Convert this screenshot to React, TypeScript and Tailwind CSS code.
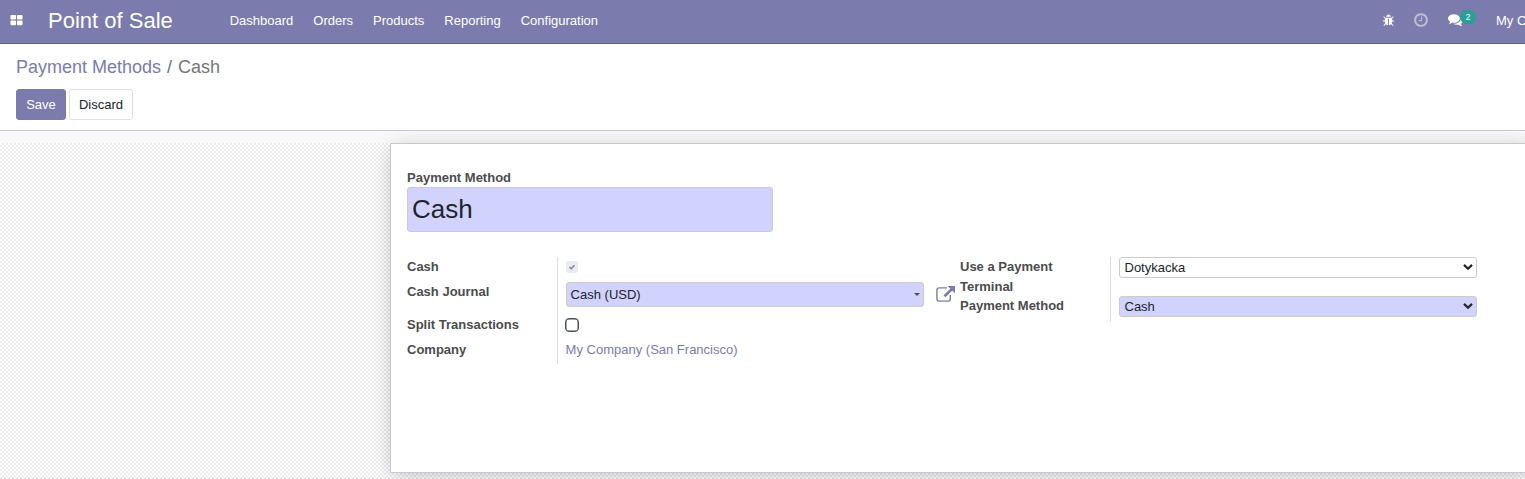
import React from "react";

const icons = {
  grid: "M832 1024v384q0 52-38 90t-90 38h-512q-52 0-90-38t-38-90v-384q0-52 38-90t90-38h512q52 0 90 38t38 90zm0-768v384q0 52-38 90t-90 38h-512q-52 0-90-38t-38-90v-384q0-52 38-90t90-38h512q52 0 90 38t38 90zm896 768v384q0 52-38 90t-90 38h-512q-52 0-90-38t-38-90v-384q0-52 38-90t90-38h512q52 0 90 38t38 90zm0-768v384q0 52-38 90t-90 38h-512q-52 0-90-38t-38-90v-384q0-52 38-90t90-38h512q52 0 90 38t38 90z",
  bug: "M1696 960q0 26-19 45t-45 19h-224q0 171-67 290l208 209q19 19 19 45t-19 45q-18 19-45 19t-45-19l-198-197q-5 5-15 13t-42 28.5-65 36.5-82 29-97 13v-896h-128v896q-51 0-101.5-13.5t-87-33-66-39-43.5-32.5l-15-14-183 207q-20 21-48 21-24 0-43-16-19-18-20.5-44.5t15.5-46.5l202-227q-58-114-58-274h-224q-26 0-45-19t-19-45 19-45 45-19h224v-294l-173-173q-19-19-19-45t19-45 45-19 45 19l173 173h844l173-173q19-19 45-19t45 19 19 45-19 45l-173 173v294h224q26 0 45 19t19 45zm-480-576h-640q0-133 93.5-226.5t226.5-93.5 226.5 93.5 93.5 226.5z",
  clock: "M1024 544v448q0 14-9 23t-23 9h-320q-14 0-23-9t-9-23v-64q0-14 9-23t23-9h224v-352q0-14 9-23t23-9h64q14 0 23 9t9 23zm416 352q0-148-73-273t-198-198-273-73-273 73-198 198-73 273 73 273 198 198 273 73 273-73 198-198 73-273zm224 0q0 209-103 385.5t-279.5 279.5-385.5 103-385.5-103-279.5-279.5-103-385.5 103-385.5 279.5-279.5 385.5-103 385.5 103 279.5 279.5 103 385.5z",
  comments: "M1408 768q0 139-94 257t-256.5 186.5-353.5 68.5q-86 0-176-16-124 88-278 128-36 9-86 16h-3q-11 0-20.5-8t-11.5-21q-1-3-1-6.5t.5-6.5 2-6l2.5-5 3.5-5.5 4-5 4.5-5 4-4.5q5-6 23-25t26-29.5 22.5-29 25-38.5 20.5-44q-124-72-195-177t-71-224q0-139 94-257t256.5-186.5 353.5-68.5 353.5 68.5 256.5 186.5 94 257zm384 256q0 120-71 224.5t-195 176.5q10 24 20.5 44t25 38.5 22.5 29 26 29.5 23 25q1 1 4 4.5t4.5 5 4 5 3.5 5.5l2.5 5 2 6 .5 6.5-1 6.5q-3 14-13 22t-22 7q-50-7-86-16-154-40-278-128-90 16-176 16-271 0-472-132 58 4 88 4 161 0 309-45t264-129q125-92 192-212t67-254q0-77-23-152 129 71 204 178t75 230z",
};

function Icon({ name, className }: { name: keyof typeof icons; className: string }) {
  return (
    <svg viewBox="0 0 1792 1792" fill="currentColor" aria-hidden="true" className={className}>
      <path d={icons[name]} />
    </svg>
  );
}

function Chevron() {
  return (
    <svg viewBox="0 0 10 6" className="mb-px h-[6px] w-[10px] fill-none stroke-[#212529] stroke-[2.2]" aria-hidden="true">
      <path d="M1 0.9 L5 4.7 L9 0.9" />
    </svg>
  );
}

function SelectBox({ value, className }: { value: string; className: string }) {
  return (
    <div className={`flex w-[358px] h-[21px] items-center justify-between rounded-[3px] border border-[#ccc] pl-[4.5px] pr-[3px] text-[#212529] ${className}`}>
      <span>{value}</span>
      <Chevron />
    </div>
  );
}

const menu = ["Dashboard", "Orders", "Products", "Reporting", "Configuration"];

function Navbar() {
  return (
    <header className="flex h-[44px] shrink-0 items-start border-b border-[#5f5e97] bg-[#7c7bad] text-white">
      <Icon name="grid" className="ml-[9.5px] mt-[14px] size-[13px] shrink-0" />
      <h1 className="ml-[25.5px] mt-[5px] w-[181.7px] shrink-0 text-[22px] leading-[32px]">Point of Sale</h1>
      <nav className="flex gap-[20px] pt-[11px] leading-[20px]">
        {menu.map((item) => (
          <a key={item}>{item}</a>
        ))}
      </nav>
      <div className="ml-auto flex w-[143px] shrink-0 items-start overflow-hidden">
        <Icon name="bug" className="mt-[14px] size-[13px] shrink-0" />
        <Icon name="clock" className="ml-[18px] mt-[12px] size-[16px] shrink-0 opacity-50" />
        <Icon name="comments" className="ml-[19px] mt-[12px] size-[15px] shrink-0" />
        <span className="-ml-[3px] mt-[10px] flex h-[14px] w-[16px] shrink-0 items-center justify-center rounded-[7px] bg-[#28a095] text-[9px] leading-none">2</span>
        <span className="ml-[20px] mt-[11px] whitespace-nowrap leading-[20px]">My Company</span>
      </div>
    </header>
  );
}

function ControlPanel() {
  return (
    <section className="h-[87px] shrink-0 border-b border-[#c8c8d3] bg-white px-4 pt-[10px]">
      <div className="flex gap-[6px] text-[18px] leading-[27px] text-[#6c757d]">
        <a className="text-[#7c7bad]">Payment Methods</a>
        <span>/</span>
        <span className="text-[#777]">Cash</span>
      </div>
      <div className="mt-[8px] flex gap-[3px]">
        <button className="h-[31px] w-[50px] rounded-[3px] border border-[#7c7bad] bg-[#7c7bad] text-white">Save</button>
        <button className="h-[31px] w-[64px] rounded-[3px] border border-[#dee2e6] bg-white text-[#212529]">Discard</button>
      </div>
    </section>
  );
}

function Form() {
  return (
    <div className="flex h-[330px] w-[1144px] shrink-0 flex-col border border-[#c8c8d3] bg-white pl-[16px] pt-[24px] text-[#4c4c4c] shadow-[0_5px_20px_-5px_rgba(0,0,0,0.2),0_0_24px_rgba(0,0,0,0.08)]">
      <label className="font-bold leading-[19px]">Payment Method</label>
      <div className="flex h-[45px] w-[366px] items-center rounded-[3px] border border-[#ccc] bg-[#d2d2ff] pl-[4px] pt-px text-[26px] text-[#212529]">Cash</div>
      <div className="mt-[25px] flex items-start">
        <div className="flex h-[107px] w-[151px] flex-col border-r border-[#ddd] font-bold leading-[20px]">
          <span>Cash</span>
          <span className="mt-[5px]">Cash Journal</span>
          <span className="mt-[13px]">Split Transactions</span>
          <span className="mt-[5px]">Company</span>
        </div>
        <div className="flex w-[402px] flex-col pl-[8px]">
          <div className="mt-[4px] flex size-[12px] items-center justify-center rounded-[3px] bg-[#e9ecef]">
            <svg viewBox="0 0 8 8" className="size-[6px] fill-none stroke-[#7c7bad] stroke-[2]"><path d="M0.7 4 L3 6.3 L7.3 1.6" /></svg>
          </div>
          <div className="mt-[9px] flex items-center">
            <div className="flex h-[25px] w-[358px] items-center justify-between rounded-[3px] border border-[#ccc] bg-[#d2d2ff] pl-[3.6px] pr-[3px] text-[#212529]">
              <span>Cash (USD)</span>
              <svg viewBox="0 0 6 3" className="h-[3px] w-[6px] fill-[#4c4c4c]"><path d="M0 0h6L3 3z" /></svg>
            </div>
            <svg viewBox="0 0 20 17" className="ml-[12px] h-[17px] w-[20px] fill-none stroke-[#7c7bad]" aria-hidden="true">
              <path d="M11 1.9H3.2Q0.9 1.9 0.9 4.2V12.8Q0.9 15.1 3.2 15.1H12Q14.3 15.1 14.3 12.8V9" strokeWidth="1.4" />
              <path d="M8.5 10.3L16 3" strokeWidth="2.6" />
              <path d="M11.5 0H19V7.2Z" fill="#7c7bad" stroke="none" />
            </svg>
          </div>
          <div className="-ml-px mt-[11px] size-[14px] rounded-[4px] border-[1.5px] border-[#495057] bg-white shadow-[inset_0_0_0_0.5px_#495057]" />
          <a className="-ml-[0.4px] mt-[8px] leading-[20px] text-[#7c7bad]">My Company (San Francisco)</a>
        </div>
        <div className="flex h-[65px] w-[151px] flex-col border-r border-[#ddd] font-bold leading-[19.5px]">
          <span className="w-[120px]">Use a Payment Terminal</span>
          <span>Payment Method</span>
        </div>
        <div className="flex flex-col gap-[18px] pl-[8px]">
          <SelectBox value="Dotykacka" className="bg-white" />
          <SelectBox value="Cash" className="bg-[#d2d2ff]" />
        </div>
      </div>
    </div>
  );
}

export default function App() {
  return (
    <div className="flex h-[479px] w-[1525px] flex-col overflow-hidden bg-white font-['Liberation_Sans',Arial,sans-serif] text-[13px] leading-[19.5px]">
      <Navbar />
      <ControlPanel />
      <main className="flex min-h-0 flex-1 flex-col overflow-hidden bg-[#f9f9f9]">
        <div className="mt-[12px] flex-1 bg-[repeating-conic-gradient(#ececec_0_25%,#ffffff_0_50%)] bg-[length:4px_4px] pl-[390px]">
          <Form />
        </div>
      </main>
    </div>
  );
}
